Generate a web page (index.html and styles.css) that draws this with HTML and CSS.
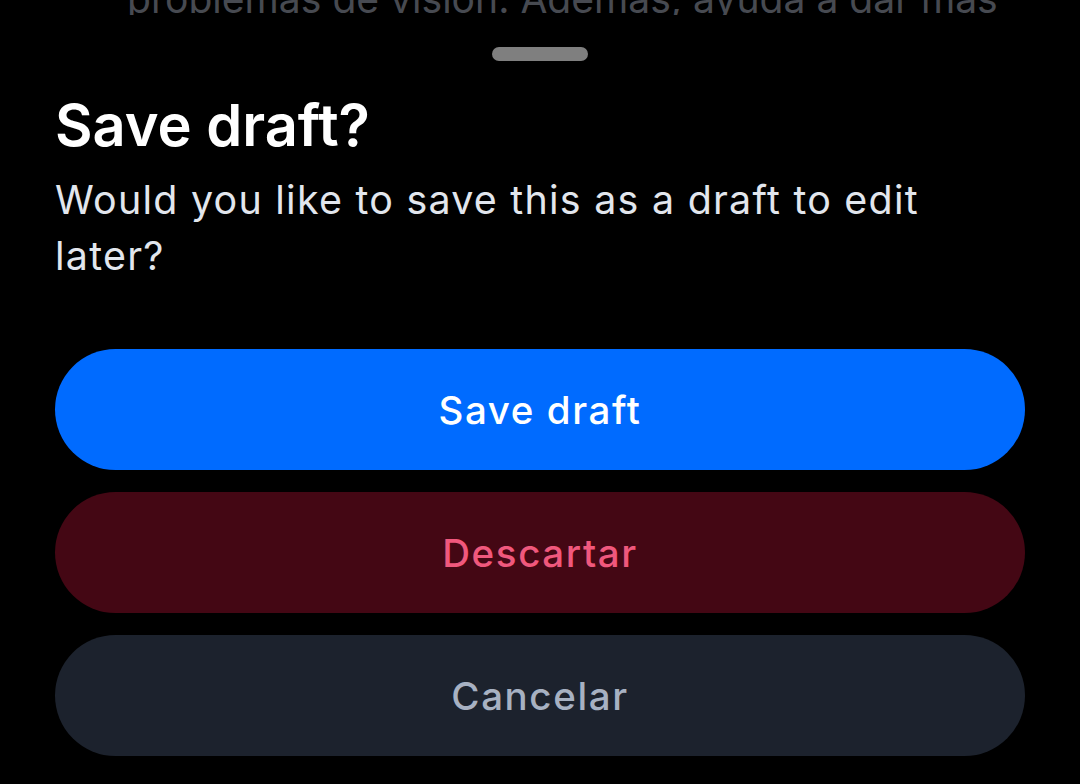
FILE: index.html
```html
<!DOCTYPE html>
<html lang="es">
<head>
<meta charset="utf-8">
<title>Save draft?</title>
<link rel="stylesheet" href="styles.css">
</head>
<body>
<div class="screen">
  <div class="backdrop">
    <p class="backdrop-text">problemas de visión. Además, ayuda a dar más</p>
  </div>
  <section class="sheet">
    <div class="handle-row"><div class="handle"></div></div>
    <h1 class="title">Save draft?</h1>
    <p class="message">Would you like to save this as a draft to edit later?</p>
    <div class="actions">
      <button class="btn btn-primary">Save draft</button>
      <button class="btn btn-danger">Descartar</button>
      <button class="btn btn-neutral">Cancelar</button>
    </div>
  </section>
</div>
</body>
</html>
```
FILE: styles.css
```css
* { box-sizing: border-box; }
html, body {
  margin: 0;
  padding: 0;
  background: #000;
  width: 1080px;
  height: 784px;
  overflow: hidden;
}
body {
  font-family: Inter, "Noto Sans", sans-serif;
  -webkit-font-smoothing: antialiased;
}
.screen {
  display: flex;
  flex-direction: column;
  height: 784px;
}
.backdrop {
  height: 15px;
  overflow: hidden;
  flex: none;
}
.backdrop-text {
  margin: -29px 0 0 127px;
  font-size: 39.1px;
  line-height: 55px;
  color: #474a51;
  white-space: nowrap;
}
.sheet {
  flex: 1;
  background: #000;
  padding: 32px 55px 0;
  display: flex;
  flex-direction: column;
}
.handle-row {
  display: flex;
  justify-content: center;
}
.handle {
  width: 96px;
  height: 14px;
  border-radius: 7px;
  background: #7f7f7f;
}
.title {
  margin: 29px 0 0;
  font-size: 57.75px;
  line-height: 70px;
  font-weight: 600;
  color: #fff;
}
.message {
  margin: 13px 0 0;
  font-size: 39.4px;
  line-height: 55.7px;
  letter-spacing: 1.25px;
  color: #e2e6ed;
}
.actions {
  margin-top: 65px;
  display: flex;
  flex-direction: column;
  gap: 22px;
}
.btn {
  height: 121px;
  border: none;
  border-radius: 61px;
  font-family: Inter, "Noto Sans", sans-serif;
  font-size: 38.5px;
  font-weight: 500;
  letter-spacing: 1.6px;
  display: flex;
  align-items: center;
  justify-content: center;
  padding: 0;
}
.btn-primary { background: #006bff; color: #fff; }
.btn-danger { background: #440714; color: #f0587d; }
.btn-neutral { background: #1c222d; color: #a7b1c2; }
```
